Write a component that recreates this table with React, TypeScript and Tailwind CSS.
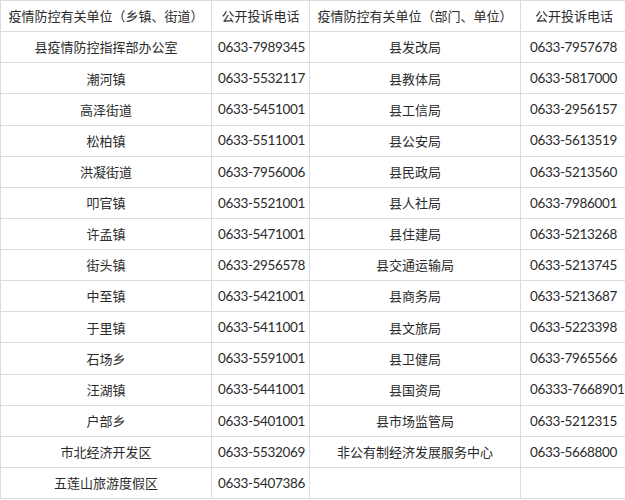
import React from "react";

const rows: [string, string, string, string][] = [
  ["县疫情防控指挥部办公室", "0633-7989345", "县发改局", "0633-7957678"],
  ["潮河镇", "0633-5532117", "县教体局", "0633-5817000"],
  ["高泽街道", "0633-5451001", "县工信局", "0633-2956157"],
  ["松柏镇", "0633-5511001", "县公安局", "0633-5613519"],
  ["洪凝街道", "0633-7956006", "县民政局", "0633-5213560"],
  ["叩官镇", "0633-5521001", "县人社局", "0633-7986001"],
  ["许孟镇", "0633-5471001", "县住建局", "0633-5213268"],
  ["街头镇", "0633-2956578", "县交通运输局", "0633-5213745"],
  ["中至镇", "0633-5421001", "县商务局", "0633-5213687"],
  ["于里镇", "0633-5411001", "县文旅局", "0633-5223398"],
  ["石场乡", "0633-5591001", "县卫健局", "0633-7965566"],
  ["汪湖镇", "0633-5441001", "县国资局", "06333-7668901"],
  ["户部乡", "0633-5401001", "县市场监管局", "0633-5212315"],
  ["市北经济开发区", "0633-5532069", "非公有制经济发展服务中心", "0633-5668800"],
  ["五莲山旅游度假区", "0633-5407386", "", ""],
];

const cjk = "font-['Noto_Sans_CJK_SC',sans-serif] text-[13px]";
const num = "font-['Lato','Noto_Sans_CJK_SC',sans-serif] text-[13.5px] tracking-[-0.35px]";
const cell = "border border-[#dcdcdc] p-0 h-[31.13px] text-[#2b2b2b] whitespace-nowrap";

export default function App() {
  return (
    <div className="w-[625px] h-[500px] bg-white overflow-hidden">
      <table className="border-collapse table-fixed w-[627px]">
        <colgroup>
          <col className="w-[211px]" />
          <col className="w-[98px]" />
          <col className="w-[211px]" />
          <col className="w-[107px]" />
        </colgroup>
        <thead>
          <tr>
            <th className={`${cell} ${cjk} font-normal text-center`}>疫情防控有关单位（乡镇、街道）</th>
            <th className={`${cell} ${cjk} font-normal text-center`}>公开投诉电话</th>
            <th className={`${cell} ${cjk} font-normal text-center`}>疫情防控有关单位（部门、单位）</th>
            <th className={`${cell} ${cjk} font-normal text-center`}>公开投诉电话</th>
          </tr>
        </thead>
        <tbody>
          {rows.map((r, i) => (
            <tr key={i}>
              <td className={`${cell} ${cjk} text-center`}>{r[0]}</td>
              <td className={`${cell} ${num} pl-[6px]`}>{r[1]}</td>
              <td className={`${cell} ${cjk} text-center`}>{r[2]}</td>
              <td className={`${cell} ${num} pl-[9px]`}>{r[3]}</td>
            </tr>
          ))}
        </tbody>
      </table>
    </div>
  );
}
